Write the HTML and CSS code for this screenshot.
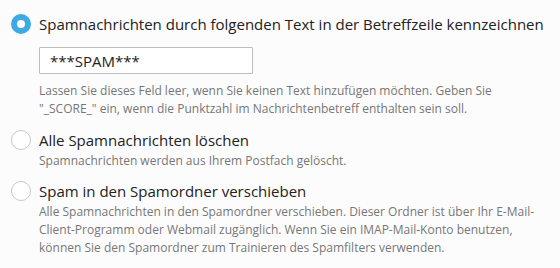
FILE: index.html
```html
<!DOCTYPE html>
<html lang="de">
<head>
<meta charset="utf-8">
<link rel="stylesheet" href="styles.css">
</head>
<body>
<div class="options">
  <div class="option">
    <span class="radio checked"></span>
    <div class="body">
      <div class="title">Spamnachrichten durch folgenden Text in der Betreffzeile kennzeichnen</div>
      <div class="field"><input type="text" value="***SPAM***"></div>
      <div class="desc first">Lassen Sie dieses Feld leer, wenn Sie keinen Text hinzufügen möchten. Geben Sie "_SCORE_" ein, wenn die Punktzahl im Nachrichtenbetreff enthalten sein soll.</div>
    </div>
  </div>
  <div class="option">
    <span class="radio"></span>
    <div class="body">
      <div class="title">Alle Spamnachrichten löschen</div>
      <div class="desc">Spamnachrichten werden aus Ihrem Postfach gelöscht.</div>
    </div>
  </div>
  <div class="option">
    <span class="radio"></span>
    <div class="body">
      <div class="title">Spam in den Spamordner verschieben</div>
      <div class="desc">Alle Spamnachrichten in den Spamordner verschieben. Dieser Ordner ist über Ihr E-Mail-Client-Programm oder Webmail zugänglich. Wenn Sie ein IMAP-Mail-Konto benutzen, können Sie den Spamordner zum Trainieren des Spamfilters verwenden.</div>
    </div>
  </div>
</div>
</body>
</html>
```
FILE: styles.css
```css
html, body {
  margin: 0;
  padding: 0;
  background: #fcfcfc;
}
body {
  font-family: "Open Sans", sans-serif;
  color: #333;
}
.options {
  padding: 14px 12px 0 11px;
  display: flex;
  flex-direction: column;
  gap: 11.5px;
}
.option {
  display: flex;
  gap: 8px;
  align-items: flex-start;
}
.radio {
  flex: none;
  box-sizing: border-box;
  width: 20px;
  height: 20px;
  border: 1px solid #c8c8c8;
  border-radius: 50%;
  background: #fff;
}
.radio.checked {
  border: 6px solid #3ea9e2;
}
.body {
  flex: 1;
}
.title {
  font-size: 15px;
  line-height: 20px;
  color: #222;
}
.field {
  margin-top: 13px;
}
.field input {
  display: block;
  box-sizing: border-box;
  width: 214px;
  height: 27px;
  margin: 0;
  border: 1px solid #bdbdbd;
  border-radius: 1px;
  background: #fff;
  padding: 0 10px;
  font-family: "Open Sans", sans-serif;
  font-size: 15px;
  color: #222;
  outline: none;
}
.desc {
  margin-top: 2px;
  font-size: 12px;
  line-height: 18px;
  color: #777;
}
.desc.first {
  margin-top: 8px;
}
```
